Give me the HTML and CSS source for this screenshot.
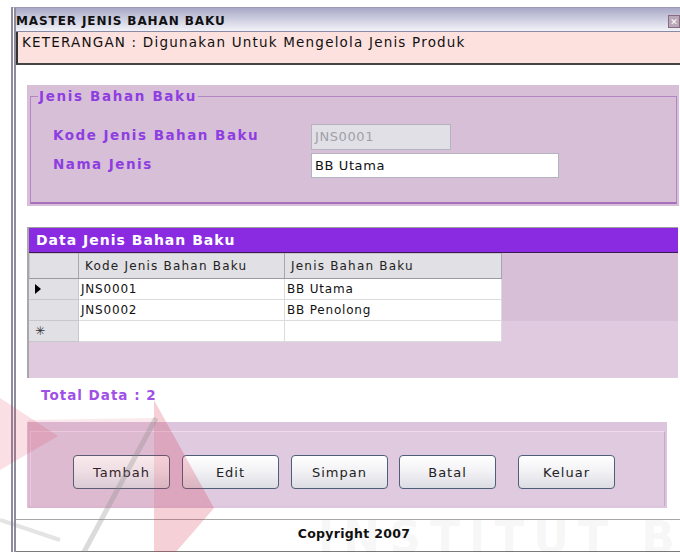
FILE: index.html
```html
<!DOCTYPE html>
<html lang="id">
<head>
<meta charset="utf-8">
<title>Master Jenis Bahan Baku</title>
<link rel="stylesheet" href="styles.css">
</head>
<body>
<div class="window">
  <div class="titlebar">
    <span class="title">MASTER JENIS BAHAN BAKU</span>
    <span class="close">&#x2715;</span>
  </div>
  <div class="info">KETERANGAN : Digunakan Untuk Mengelola Jenis Produk</div>

  <div class="group-panel">
    <fieldset class="group">
      <legend>Jenis Bahan Baku</legend>
      <div class="form">
        <label class="lbl">Kode Jenis Bahan Baku</label>
        <div class="input input-disabled">JNS0001</div>
        <label class="lbl">Nama Jenis</label>
        <div class="input input-name">BB Utama</div>
      </div>
    </fieldset>
  </div>

  <div class="data-panel">
    <div class="data-head">Data Jenis Bahan Baku</div>
    <div class="grid-area">
      <table class="grid">
        <colgroup>
          <col class="col-rh">
          <col class="col-kode">
          <col class="col-jenis">
        </colgroup>
        <tr class="hdr">
          <th class="rh"></th>
          <th>Kode Jenis Bahan Baku</th>
          <th>Jenis Bahan Baku</th>
        </tr>
        <tr>
          <td class="rh"><span class="arrow"></span></td>
          <td>JNS0001</td>
          <td>BB Utama</td>
        </tr>
        <tr>
          <td class="rh"></td>
          <td>JNS0002</td>
          <td>BB Penolong</td>
        </tr>
        <tr>
          <td class="rh star">&#x2733;</td>
          <td></td>
          <td></td>
        </tr>
      </table>
    </div>
  </div>

  <div class="total">Total Data : 2</div>

  <div class="button-panel">
    <div class="button-box">
      <button class="btn">Tambah</button>
      <button class="btn">Edit</button>
      <button class="btn">Simpan</button>
      <button class="btn">Batal</button>
      <button class="btn">Keluar</button>
    </div>
  </div>

  <div class="footer">Copyright 2007</div>
</div>

<!-- faint campus watermark printed over the form -->
<svg class="mark" width="680" height="552" viewBox="0 0 680 552">
  <polygon points="0,398 58,436 0,470" fill="#e23a5a" opacity="0.16"/>
  <polygon points="28,420 154,418 154,508 28,508" fill="#d0304f" opacity="0.10"/>
  <polygon points="154,400 214,508 176,552 154,552" fill="#d0284a" opacity="0.22"/>
  <line x1="156" y1="418" x2="84" y2="552" stroke="#8a8a8a" stroke-width="5" opacity="0.3"/>
  <line x1="0" y1="520" x2="60" y2="540" stroke="#8a8a8a" stroke-width="4" opacity="0.22"/>
</svg>
<div class="mark-clip"><span class="mark-text">INSTITUT B</span></div>
</body>
</html>
```

FILE: styles.css
```css
html, body {
  margin: 0;
  padding: 0;
  background: #ffffff;
}

body {
  width: 680px;
  height: 552px;
  overflow: hidden;
  position: relative;
  font-family: "DejaVu Sans", sans-serif;
}

.window {
  margin: 7px 0 0 11px;
  height: 545px;
  border-left: 5px double #8c8c9c;
  border-top: 1px solid #9a9ab4;
  box-sizing: border-box;
  display: flex;
  flex-direction: column;
}

/* caption bar */
.titlebar {
  height: 24px;
  background: linear-gradient(#a9a9c7, #d6d6e6 60%, #f2f2f8);
  border-bottom: 1px solid #8a8aa6;
  display: flex;
  align-items: center;
  justify-content: space-between;
  box-sizing: border-box;
}

.title {
  font-weight: bold;
  font-size: 12px;
  letter-spacing: 0.9px;
  color: #111;
  padding-top: 2px;
}

.close {
  width: 12px;
  height: 13px;
  margin-top: 4px;
  background: #b8a8b8;
  border: 1px solid #8a6a80;
  color: #fff;
  font-size: 9px;
  font-weight: bold;
  line-height: 13px;
  text-align: center;
  overflow: hidden;
  box-sizing: border-box;
}

.info {
  height: 33px;
  background: #fde1de;
  border-left: 2px solid #333;
  border-bottom: 2px solid #444;
  box-sizing: border-box;
  padding: 2px 0 0 4px;
  font-size: 13.5px;
  letter-spacing: 1.2px;
  color: #111;
}

/* "Jenis Bahan Baku" group */
.group-panel {
  margin: 20px 0 0 11px;
  width: 652px;
  height: 121px;
  background: #d8bfd8;
  padding: 2px 2px 2px 3px;
  box-sizing: border-box;
}

.group {
  margin: 0;
  padding: 0;
  height: 117px;
  box-sizing: border-box;
  border: 1px solid #b286c4;
  border-bottom: 2px solid #a870bc;
}

.group legend {
  margin-left: 7px;
  padding: 0 1px;
  font-weight: bold;
  font-size: 13.5px;
  letter-spacing: 1.65px;
  color: #8e3ee0;
  line-height: 18px;
}

.form {
  display: grid;
  grid-template-columns: 258px auto;
  grid-template-rows: 26px 25px;
  row-gap: 3px;
  align-items: center;
  padding: 19px 0 0 22px;
}

.lbl {
  font-weight: bold;
  font-size: 13.5px;
  letter-spacing: 1.5px;
  color: #8e3ee0;
  padding-bottom: 4px;
}

.input {
  height: 100%;
  box-sizing: border-box;
  border: 1px solid #b4b4c0;
  font-size: 13px;
  padding: 4px 0 0 3px;
  letter-spacing: 0.6px;
}

.input-disabled {
  width: 140px;
  background: #e1e0e6;
  color: #a0a0a8;
}

.input-name {
  width: 248px;
  background: #ffffff;
  color: #111;
}

/* data grid panel */
.data-panel {
  margin: 21px 0 0 11px;
  width: 651px;
  height: 151px;
  border-top: 1px solid #a0a0a0;
  border-left: 2px solid #a8a8a8;
  box-sizing: border-box;
  display: flex;
  flex-direction: column;
}

.data-head {
  height: 25px;
  background: #8a2be2;
  border-bottom: 1px solid #3a1a50;
  box-sizing: border-box;
  color: #fff;
  font-weight: bold;
  font-size: 14px;
  letter-spacing: 1px;
  padding: 4px 0 0 7px;
}

.grid-area {
  flex: 1;
  background: linear-gradient(#d8bfd8 0 68px, #dfcadf 68px);
}

.grid {
  table-layout: fixed;
  width: 472px;
  border-collapse: collapse;
  background: #fff;
  font-size: 12px;
  letter-spacing: 0.8px;
  color: #111;
}

.col-rh { width: 49px; }
.col-kode { width: 206px; }
.col-jenis { width: 217px; }

.grid th,
.grid td {
  padding: 0 0 0 2px;
  text-align: left;
  font-weight: normal;
  border: 1px solid #dcdcdc;
  white-space: nowrap;
  overflow: hidden;
}

.grid .hdr th {
  height: 24px;
  background: #e1e0e5;
  border-color: #c8c8cc #a8a8ac #9c9ca0 #c8c8cc;
  color: #222;
  padding-left: 6px;
  letter-spacing: 1.2px;
}

.grid td { height: 20px; }

.grid .rh {
  padding: 0 0 0 5px;
  background: #e1e0e5;
  border-color: #fafafa #c8c8cc #c8c8cc #e1e0e5;
}

.arrow {
  display: inline-block;
  width: 0;
  height: 0;
  border-top: 5px solid transparent;
  border-bottom: 5px solid transparent;
  border-left: 6px solid #000;
  vertical-align: -1px;
}

.star {
  font-size: 12px;
  color: #333;
}

.total {
  margin: 9px 0 0 25px;
  height: 35px;
  font-weight: bold;
  font-size: 13.5px;
  letter-spacing: 1px;
  color: #a050e6;
}

/* command buttons */
.button-panel {
  margin: 0 0 0 11px;
  width: 640px;
  height: 86px;
  background: #ddc6dd;
  padding: 9px 2px 2px 3px;
  box-sizing: border-box;
}

.button-box {
  height: 100%;
  box-sizing: border-box;
  border-top: 1px solid #eedcec;
  border-left: 1px solid #eedcec;
  border-right: 1px solid #c8a8c8;
  background: #dfcadf;
  padding: 23px 0 0 42px;
  display: flex;
  align-items: flex-start;
}

.btn {
  width: 97px;
  height: 34px;
  margin-right: 12px;
  border: 1px solid #4e6078;
  border-radius: 4px;
  background: linear-gradient(#ffffff, #f3f3f6 45%, #dcdce4);
  font-family: "DejaVu Sans", sans-serif;
  font-size: 13px;
  letter-spacing: 1px;
  color: #222;
  padding: 0;
}

.btn:nth-child(3) { margin-right: 11px; }
.btn:nth-child(4) { margin-right: 22px; }

.footer {
  margin-top: 11px;
  border-top: 1px solid #a8a8a8;
  border-bottom: 1px solid #7a7a7a;
  flex: 1;
  text-align: center;
  font-weight: bold;
  font-size: 12.5px;
  letter-spacing: 0.3px;
  color: #111;
  padding: 6px 0 0 12px;
}

/* watermark layer drawn over the form */
.mark {
  position: absolute;
  left: 0;
  top: 0;
  pointer-events: none;
}

.mark-clip {
  position: absolute;
  left: 318px;
  top: 512px;
  width: 362px;
  height: 40px;
  overflow: hidden;
  pointer-events: none;
}

.mark-text {
  display: block;
  font-weight: bold;
  font-size: 44px;
  line-height: 52px;
  letter-spacing: 9px;
  color: rgba(0, 0, 0, 0.05);
  white-space: nowrap;
}
```
